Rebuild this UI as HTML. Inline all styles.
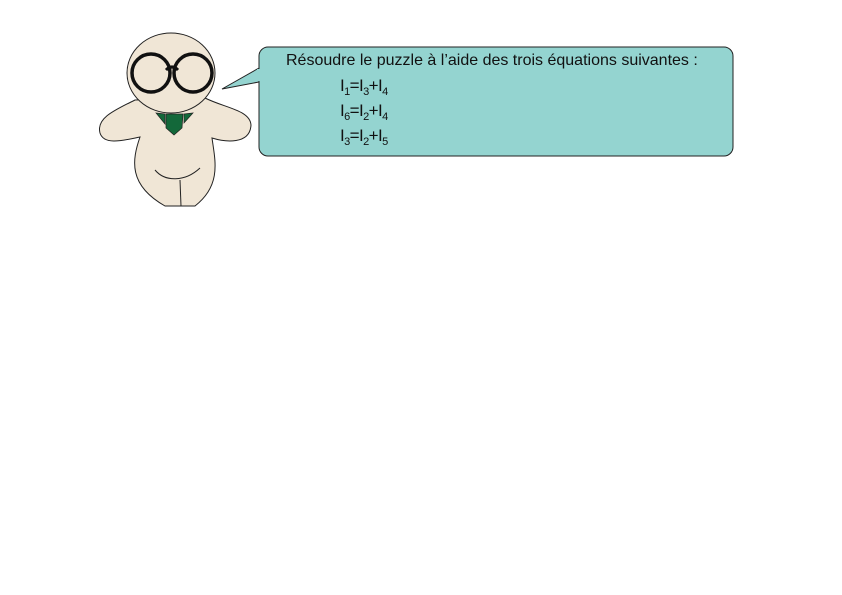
<!DOCTYPE html>
<html><head><style>
body{margin:0;width:842px;height:595px;background:#fff;overflow:hidden;position:relative;font-family:"Liberation Sans",sans-serif}
.t{position:absolute;font-size:16px;color:#111;white-space:nowrap}
.e{font-size:17px;letter-spacing:-0.6px}
sub{font-size:11px;vertical-align:-4px}
</style></head><body>
<svg width="842" height="595" style="position:absolute;left:0;top:0">
<path d="M259 68 L222 89 L259 82 Z" fill="#94d4d0" stroke="#222" stroke-width="1"/>
<rect x="259" y="47" width="474" height="109" rx="9" fill="#94d4d0" stroke="#222" stroke-width="1"/>
<rect x="257" y="69" width="4" height="12" fill="#94d4d0"/>
<path d="M135 100 C115 110 96 118 100 133 C104 146 125 140 140 137 C132 160 128 185 165 206 L195 206 C222 185 215 160 212 138 C225 142 250 145 251 125 C250 110 225 108 205 98 Z" fill="#f0e6d6" stroke="#222" stroke-width="1"/>
<path d="M155 170 C165 182 185 182 200 168" fill="none" stroke="#222" stroke-width="1"/>
<path d="M180 180 L181 206" stroke="#222" stroke-width="1"/>
<ellipse cx="171" cy="73" rx="44" ry="40" fill="#f0e6d6" stroke="#222" stroke-width="1"/>
<circle cx="151" cy="73" r="19" fill="none" stroke="#111" stroke-width="3.5"/>
<circle cx="193" cy="73" r="19" fill="none" stroke="#111" stroke-width="3.5"/>
<path d="M166 70 Q172 64 178 70" fill="none" stroke="#111" stroke-width="3"/>
<path d="M156 113 L165 114 L165 124 Z M184 114 L193 113 L184 123 Z" fill="#13683a" stroke="#222" stroke-width="0.7"/>
<path d="M166 114 L183 114 L182 128 L174 135 L166 128 Z" fill="#13683a" stroke="#222" stroke-width="0.7"/>
</svg>
<div class="t" style="left:286px;top:52px">Résoudre le puzzle à l’aide des trois équations suivantes :</div>
<div class="t e" style="left:340px;top:76px">I<sub>1</sub>=I<sub>3</sub>+I<sub>4</sub></div>
<div class="t e" style="left:340px;top:101px">I<sub>6</sub>=I<sub>2</sub>+I<sub>4</sub></div>
<div class="t e" style="left:340px;top:126px">I<sub>3</sub>=I<sub>2</sub>+I<sub>5</sub></div>
</body></html>
